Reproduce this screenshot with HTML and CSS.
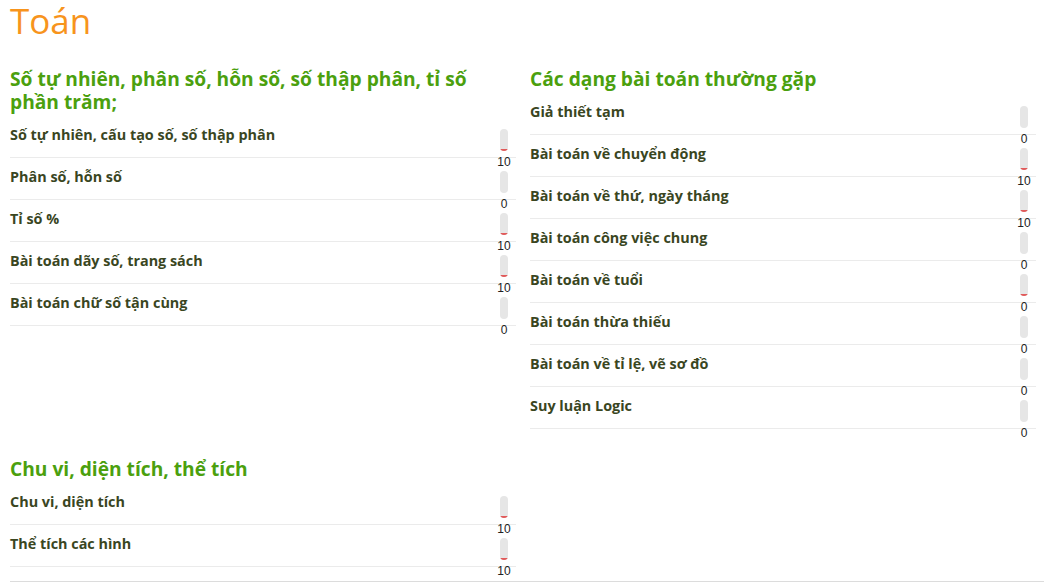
FILE: index.html
```html
<!DOCTYPE html>
<html lang="vi">
<head>
    <meta charset="UTF-8">
    <meta name="viewport" content="width=device-width, initial-scale=1.0">
    <title>Toán</title>
    <link rel="stylesheet" href="styles.css">
</head>
<body>
    <h1 class="subject-title">Toán</h1>

    <div class="topics">
        <div class="topic">
            <h2>Số tự nhiên, phân số, hỗn số, số thập phân, tỉ số phần trăm;</h2>
            <div class="lesson">
                <span class="lesson-name">Số tự nhiên, cấu tạo số, số thập phân</span>
                <div class="score"><div class="bar"><div class="fill" style="height: 10%"></div></div><span class="num">10</span></div>
            </div>
            <div class="lesson">
                <span class="lesson-name">Phân số, hỗn số</span>
                <div class="score"><div class="bar"><div class="fill" style="height: 0%"></div></div><span class="num">0</span></div>
            </div>
            <div class="lesson">
                <span class="lesson-name">Tỉ số %</span>
                <div class="score"><div class="bar"><div class="fill" style="height: 10%"></div></div><span class="num">10</span></div>
            </div>
            <div class="lesson">
                <span class="lesson-name">Bài toán dãy số, trang sách</span>
                <div class="score"><div class="bar"><div class="fill" style="height: 10%"></div></div><span class="num">10</span></div>
            </div>
            <div class="lesson">
                <span class="lesson-name">Bài toán chữ số tận cùng</span>
                <div class="score"><div class="bar"><div class="fill" style="height: 0%"></div></div><span class="num">0</span></div>
            </div>
        </div>

        <div class="topic">
            <h2>Các dạng bài toán thường gặp</h2>
            <div class="lesson">
                <span class="lesson-name">Giả thiết tạm</span>
                <div class="score"><div class="bar"><div class="fill" style="height: 0%"></div></div><span class="num">0</span></div>
            </div>
            <div class="lesson">
                <span class="lesson-name">Bài toán về chuyển động</span>
                <div class="score"><div class="bar"><div class="fill" style="height: 10%"></div></div><span class="num">10</span></div>
            </div>
            <div class="lesson">
                <span class="lesson-name">Bài toán về thứ, ngày tháng</span>
                <div class="score"><div class="bar"><div class="fill" style="height: 10%"></div></div><span class="num">10</span></div>
            </div>
            <div class="lesson">
                <span class="lesson-name">Bài toán công việc chung</span>
                <div class="score"><div class="bar"><div class="fill" style="height: 0%"></div></div><span class="num">0</span></div>
            </div>
            <div class="lesson">
                <span class="lesson-name">Bài toán về tuổi</span>
                <div class="score"><div class="bar"><div class="fill" style="height: 10%"></div></div><span class="num">0</span></div>
            </div>
            <div class="lesson">
                <span class="lesson-name">Bài toán thừa thiếu</span>
                <div class="score"><div class="bar"><div class="fill" style="height: 0%"></div></div><span class="num">0</span></div>
            </div>
            <div class="lesson">
                <span class="lesson-name">Bài toán về tỉ lệ, vẽ sơ đồ</span>
                <div class="score"><div class="bar"><div class="fill" style="height: 0%"></div></div><span class="num">0</span></div>
            </div>
            <div class="lesson">
                <span class="lesson-name">Suy luận Logic</span>
                <div class="score"><div class="bar"><div class="fill" style="height: 0%"></div></div><span class="num">0</span></div>
            </div>
        </div>

        <div class="topic">
            <h2>Chu vi, diện tích, thể tích</h2>
            <div class="lesson">
                <span class="lesson-name">Chu vi, diện tích</span>
                <div class="score"><div class="bar"><div class="fill" style="height: 10%"></div></div><span class="num">10</span></div>
            </div>
            <div class="lesson">
                <span class="lesson-name">Thể tích các hình</span>
                <div class="score"><div class="bar"><div class="fill" style="height: 10%"></div></div><span class="num">10</span></div>
            </div>
        </div>
    </div>

    <div class="page-end"></div>
</body>
</html>
```

FILE: styles.css
```css
* {
    margin: 0;
    padding: 0;
    box-sizing: border-box;
}

body {
    font-family: 'Open Sans', 'Noto Sans', sans-serif;
    background: #fff;
    color: #333;
    padding: 0 8px 0 10px;
}

.subject-title {
    color: #f7941d;
    font-size: 35px;
    font-weight: 400;
    line-height: 38px;
    padding-top: 2px;
}

.topics {
    display: grid;
    grid-template-columns: 1fr 1fr;
    column-gap: 14px;
    row-gap: 28px;
    margin-top: 27px;
    align-items: start;
}

.topic h2 {
    color: #4ba00e;
    font-size: 19.2px;
    font-weight: 700;
    line-height: 23px;
    margin-bottom: 3px;
}

.lesson {
    display: flex;
    justify-content: space-between;
    align-items: flex-start;
    height: 42px;
    border-bottom: 1px solid #ebebeb;
}

.lesson-name {
    color: #3a461f;
    font-size: 14.4px;
    font-weight: 700;
    line-height: 20px;
    padding-top: 9px;
}

.score {
    width: 24px;
    display: flex;
    flex-direction: column;
    align-items: center;
    padding-top: 13px;
}

.bar {
    width: 8px;
    height: 22px;
    border-radius: 4px;
    background: #e6e6e6;
    display: flex;
    flex-direction: column;
    justify-content: flex-end;
    overflow: hidden;
}

.fill {
    background: #e05a5a;
}

.num {
    font-family: 'Liberation Sans', Arial, sans-serif;
    font-size: 12px;
    line-height: 14px;
    color: #222;
    margin-top: 4px;
}

.page-end {
    margin-top: 14px;
    margin-right: -8px;
    border-top: 1px solid #dcdcdc;
}
```
